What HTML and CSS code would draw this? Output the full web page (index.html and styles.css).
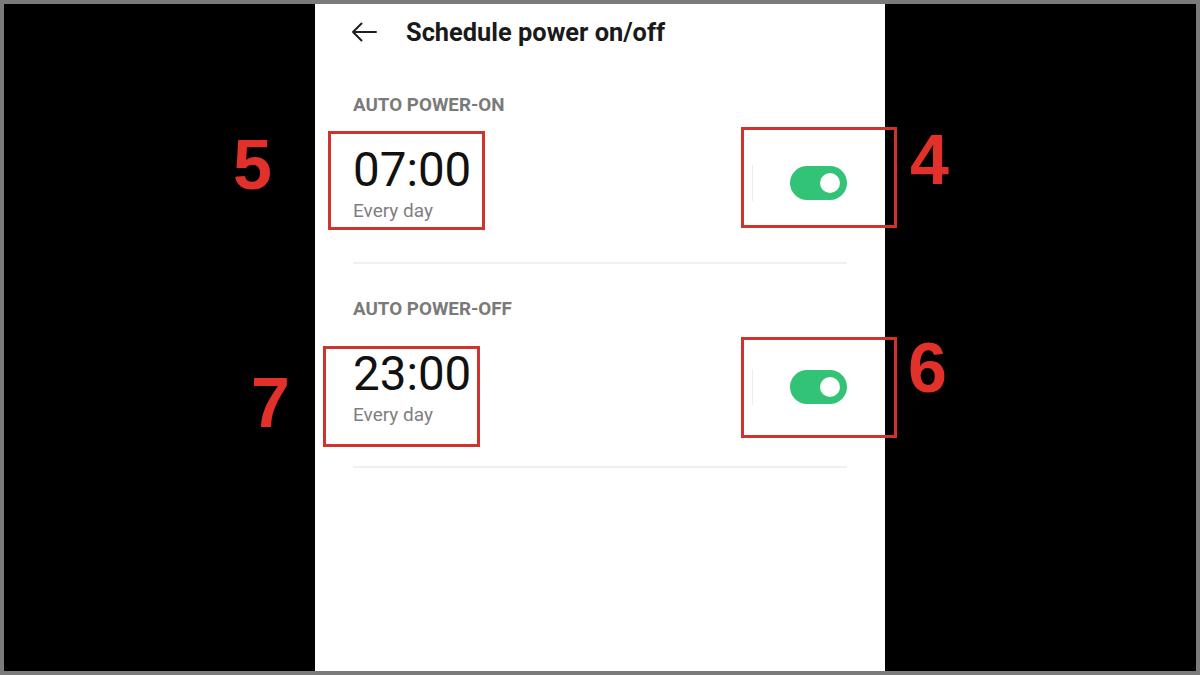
FILE: index.html
```html
<!DOCTYPE html>
<html lang="en">
<head>
    <meta charset="UTF-8">
    <meta name="viewport" content="width=device-width, initial-scale=1.0">
    <title>Schedule power on/off</title>
    <link rel="stylesheet" href="styles.css">
</head>
<body>
    <div class="frame">
        <!-- Ekran telefonu -->
        <div class="screen">
            <header class="topbar">
                <svg class="back" width="26" height="20" viewBox="0 0 26 20">
                    <path d="M25 10H2M10.5 1.5L2 10l8.5 8.5" fill="none" stroke="#1f1f1f" stroke-width="2" stroke-linecap="round" stroke-linejoin="round"/>
                </svg>
                <h1>Schedule power on/off</h1>
            </header>

            <section class="group">
                <div class="group-label">AUTO POWER-ON</div>
                <div class="row">
                    <div class="time-block">
                        <div class="time">07:00</div>
                        <div class="repeat">Every day</div>
                    </div>
                    <div class="switch-area">
                        <span class="sep"></span>
                        <span class="switch"><span class="knob"></span></span>
                    </div>
                </div>
            </section>

            <section class="group">
                <div class="group-label">AUTO POWER-OFF</div>
                <div class="row">
                    <div class="time-block">
                        <div class="time">23:00</div>
                        <div class="repeat">Every day</div>
                    </div>
                    <div class="switch-area">
                        <span class="sep"></span>
                        <span class="switch"><span class="knob"></span></span>
                    </div>
                </div>
            </section>
        </div>

        <!-- Oznaczenia -->
        <div class="mark mark-5"></div>
        <div class="mark mark-4"></div>
        <div class="mark mark-7"></div>
        <div class="mark mark-6"></div>
        <span class="num num-5">5</span>
        <span class="num num-4">4</span>
        <span class="num num-7">7</span>
        <span class="num num-6">6</span>
    </div>
</body>
</html>
```

FILE: styles.css
```css
body {
    margin: 0;
    font-family: Roboto, "Noto Sans", sans-serif;
    background: #000;
}
.frame {
    position: relative;
    width: 1200px;
    height: 675px;
    box-sizing: border-box;
    border: 4px solid #7b7b7b;
    background: #000;
    display: flex;
    justify-content: center;
}
.screen {
    width: 570px;
    height: 100%;
    background: #fff;
}
.topbar {
    height: 56px;
    display: flex;
    align-items: center;
    padding-left: 36px;
}
.back {
    display: block;
    margin-right: 29px;
}
h1 {
    margin: 0;
    font-size: 25.4px;
    font-weight: bold;
    color: #1a1a1a;
}
.group {
    margin: 0 38px;
    padding-top: 35px;
    border-bottom: 2px solid #f0f0f0;
}
.group-label {
    font-size: 18.8px;
    line-height: 20px;
    font-weight: bold;
    color: #7a7a7a;
}
.row {
    display: flex;
    align-items: center;
    justify-content: space-between;
    margin-top: 28px;
    padding-bottom: 40px;
}
.time {
    font-size: 47.5px;
    line-height: 54px;
    color: #111;
}
.repeat {
    margin-top: 3px;
    font-size: 19px;
    line-height: 22px;
    color: #7f7f7f;
}
.switch-area {
    display: flex;
    align-items: center;
    gap: 37px;
}
.sep {
    width: 1px;
    height: 36px;
    background: #e6edf5;
}
.switch {
    width: 57px;
    height: 34px;
    border-radius: 17px;
    background: #33c377;
    display: flex;
    align-items: center;
    justify-content: flex-end;
    padding-right: 7px;
    box-sizing: border-box;
}
.knob {
    width: 20px;
    height: 20px;
    border-radius: 50%;
    background: #fff;
}
.mark {
    position: absolute;
    border: 3px solid #d0332e;
    box-sizing: border-box;
}
.mark-5 { left: 324px; top: 127px; width: 157px; height: 99px; }
.mark-4 { left: 737px; top: 123px; width: 156px; height: 101px; }
.mark-7 { left: 319px; top: 342px; width: 157px; height: 101px; }
.mark-6 { left: 737px; top: 333px; width: 156px; height: 101px; }
.num {
    position: absolute;
    font-family: "Liberation Sans", Arial, sans-serif;
    font-weight: bold;
    font-size: 70px;
    line-height: 1;
    color: #e2302a;
}
.num-5 { left: 229px; top: 126px; }
.num-4 { left: 906px; top: 121px; }
.num-7 { left: 247px; top: 364px; }
.num-6 { left: 904px; top: 329px; }
```
